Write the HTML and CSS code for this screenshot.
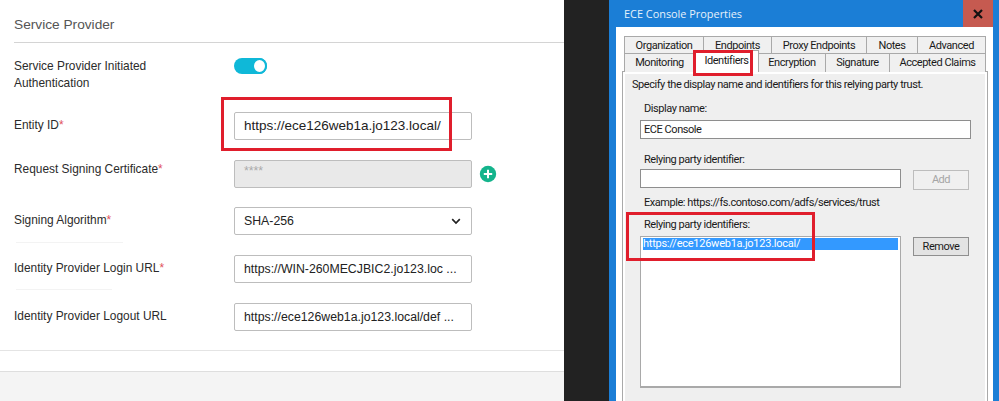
FILE: index.html
```html
<!DOCTYPE html>
<html lang="en">
<head>
<meta charset="utf-8">
<title>Service Provider and ECE Console Properties</title>
<link rel="stylesheet" href="styles.css">
</head>
<body>
<div class="page">
  <main class="panel">
    <h2 class="heading">Service Provider</h2>
    <div class="form">
      <div class="row row-toggle">
        <div class="label label-two">Service Provider Initiated Authentication</div>
        <div class="toggle"><span class="knob"></span></div>
      </div>
      <div class="row">
        <div class="label">Entity ID<span class="req">*</span></div>
        <div class="field field-large">https://ece126web1a.jo123.local/</div>
      </div>
      <div class="row">
        <div class="label label-high">Request Signing Certificate<span class="req">*</span></div>
        <div class="field field-disabled">****</div>
        <svg class="plus" viewBox="0 0 18 18" width="18" height="18"><circle cx="9" cy="9" r="8.2" fill="#14b48c"/><path d="M9 4.8v8.4M4.8 9h8.4" stroke="#fff" stroke-width="2" fill="none"/></svg>
      </div>
      <div class="row">
        <div class="label">Signing Algorithm<span class="req">*</span><div class="rule rule-a"></div></div>
        <div class="field field-select"><span>SHA-256</span>
          <svg viewBox="0 0 10 7" width="10" height="7"><path d="M1.2 1.2 5 5l3.800-3.800" stroke="#222" stroke-width="1.700" fill="none"/></svg>
        </div>
      </div>
      <div class="row">
        <div class="label">Identity Provider Login URL<span class="req">*</span><div class="rule rule-b"></div></div>
        <div class="field">https://WIN-260MECJBIC2.jo123.loc ...</div>
      </div>
      <div class="row">
        <div class="label">Identity Provider Logout URL</div>
        <div class="field">https://ece126web1a.jo123.local/def ...</div>
      </div>
    </div>
    <div class="spacer"></div>
    <div class="footer"></div>
  </main>
  <div class="desk">
    <section class="window">
      <header class="titlebar">
        <span class="title">ECE Console Properties</span>
        <span class="close"><svg viewBox="0 0 10 10" width="10" height="10"><path d="M1 1l8 8M9 1 1 9" stroke="#111" stroke-width="2.200" fill="none"/></svg></span>
      </header>
      <div class="client">
        <div class="tabs tabs-back">
          <span class="tab">Organization</span><span class="tab">Endpoints</span><span class="tab">Proxy Endpoints</span><span class="tab">Notes</span><span class="tab">Advanced</span>
        </div>
        <div class="tabs tabs-front">
          <span class="tab">Monitoring</span><span class="tab tab-active">Identifiers</span><span class="tab">Encryption</span><span class="tab">Signature</span><span class="tab">Accepted Claims</span>
        </div>
        <div class="sheet">
          <p class="intro">Specify the display name and identifiers for this relying party trust.</p>
          <label class="cap cap-display">Display name:</label>
          <div class="box box-wide">ECE Console</div>
          <label class="cap cap-party">Relying party identifier:</label>
          <div class="line line-input">
            <div class="box box-narrow"></div>
            <span class="btn btn-off">Add</span>
          </div>
          <p class="cap cap-example">Example: https://fs.contoso.com/adfs/services/trust</p>
          <label class="cap cap-list">Relying party identifiers:</label>
          <div class="line">
            <div class="list"><div class="selected">https://ece126web1a.jo123.local/</div></div>
            <span class="btn btn-on">Remove</span>
          </div>
        </div>
      </div>
    </section>
  </div>
  <div class="mark mark-entity"></div>
  <div class="mark mark-tab"></div>
  <div class="mark mark-list"></div>
</div>
</body>
</html>
```
FILE: styles.css
```css
* { box-sizing: border-box; }
html, body { margin: 0; padding: 0; background: #fff; }
.page {
  position: relative;
  display: flex;
  width: 999px;
  height: 401px;
  overflow: hidden;
  font-family: "Liberation Sans", Arial, sans-serif;
}

/* left panel */
.panel {
  width: 564px;
  flex: none;
  display: flex;
  flex-direction: column;
  background: #fff;
  color: #2b2b2b;
  font-size: 11.900px;
}
.heading {
  margin: 0 0 0 14px;
  height: 43px;
  padding-top: 16px;
  border-bottom: 1px solid #d4d4d4;
  font-size: 13.700px;
  line-height: 18px;
  font-weight: 400;
  color: #555;
}
.form {
  display: flex;
  flex-direction: column;
  gap: 19.75px;
  padding: 14px 0 0 14px;
}
.row { display: flex; height: 28px; align-items: flex-start; }
.row-toggle { height: 35px; }
.label {
  width: 220px;
  flex: none;
  padding-top: 5px;
  line-height: 17px;
}
.label-two { width: 140px; margin-right: 80px; padding-top: 1px; line-height: 17px; }
.label-high { padding-top: 1px; }
.req { color: #e0505a; }
.rule { height: 1px; background: #f3f3f3; }
.rule-a { width: 107px; margin: 13px 0 0 2px; }
.rule-b { width: 96px; margin: 12px 0 0 2px; }
.toggle {
  width: 33px;
  height: 16px;
  margin-top: 1px;
  border-radius: 8px;
  background: #0fb8d8;
  display: flex;
  justify-content: flex-end;
}
.knob {
  width: 15px;
  height: 16px;
  border-radius: 50%;
  background: #fff;
  border: 2px solid #0fb8d8;
}
.field {
  width: 238px;
  height: 28px;
  flex: none;
  padding: 0 9px;
  border: 1px solid #bdbdbd;
  border-radius: 2px;
  background: #fff;
  font-size: 12.300px;
  line-height: 26px;
  color: #222;
  white-space: nowrap;
  overflow: hidden;
}
.field-large { font-size: 13.500px; }
.field-disabled { background: #e9e9e9; color: #aaa; line-height: 20px; }
.field-select { display: flex; align-items: center; justify-content: space-between; padding-right: 10px; }
.plus { margin: 5px 0 0 7px; }
.spacer { margin-top: 19px; border-top: 1px solid #e4e4e4; border-bottom: 1px solid #dedede; height: 22px; }
.footer { flex: 1; background: #f4f4f4; }

/* dialog */
.desk {
  flex: 1;
  background: #222;
  padding-left: 45px;
}
.window {
  height: 100%;
  background: #1b7ed6;
  padding: 0 6px 0 7px;
  display: flex;
  flex-direction: column;
  font-family: Roboto, "Liberation Sans", sans-serif;
  font-size: 11px;
  letter-spacing: -0.45px;
  color: #1a1a1a;
}
.titlebar { height: 27px; flex: none; display: flex; justify-content: space-between; }
.title { padding: 6px 0 0 8px; color: #e6f1fb; font-family: "Open Sans", sans-serif; font-size: 10.900px; letter-spacing: 0; line-height: 15px; }
.close {
  width: 30px;
  height: 27px;
  background: #c65a50;
  display: flex;
  align-items: center;
  justify-content: center;
}
.client { flex: 1; background: #fff; padding: 9px 5px 0 6px; }
.tabs { display: grid; margin: 0 2px; height: 17px; }
.tabs-back { grid-template-columns: 79px 68px 95px 51px 68px; }
.tabs-front { grid-template-columns: 70px 64px 67px 64px 96px; height: 18px; }
.tab {
  background: #f0f0f0;
  border: 1px solid #a9a9a9;
  border-bottom: 0;
  margin-right: -1px;
  text-align: center;
  line-height: 18px;
  white-space: nowrap;
}
.tab-active {
  position: relative;
  z-index: 1;
  margin-top: -3px;
  height: 22px;
  background: #fff;
  line-height: 20px;
}
.sheet {
  height: 400px;
  background: #efefef;
  border: 1px solid #a9a9a9;
  box-shadow: inset 0 0 0 2px #fff;
  padding: 5px 16px 0 17px;
}
.intro { margin: 0 0 0 -8px; line-height: 15px; white-space: nowrap; }
.cap { display: block; margin: 0; line-height: 15px; padding-left: 4px; white-space: nowrap; }
.cap-display { margin-top: 9px; }
.cap-party { margin-top: 13px; }
.cap-example { margin-top: 5px; }
.cap-list { margin-top: 7px; }
.box {
  height: 19px;
  background: #fff;
  border: 1px solid #8e8e8e;
  padding-left: 3px;
  line-height: 17px;
}
.box-wide { width: 331px; margin-top: 4px; }
.box-narrow { width: 261px; flex: none; }
.line { display: flex; gap: 12px; margin-top: 4px; align-items: flex-start; }
.line-input { margin-top: 2px; }
.btn {
  width: 56px;
  height: 20px;
  flex: none;
  text-align: center;
  line-height: 18px;
  border: 1px solid #bdbdbd;
  margin-top: 1px;
}
.btn-off { color: #a5a5a5; background: #f0f0f0; }
.btn-on { border-color: #8f8f8f; background: #e3e3e3; height: 19px; line-height: 17px; }
.list {
  width: 261px;
  height: 152px;
  flex: none;
  background: #fff;
  border: 1px solid #a9a9a9;
  border-bottom-width: 2px;
  padding: 1px 2px;
}
.selected { height: 12px; background: #3399ff; color: #fff; line-height: 12px; letter-spacing: -0.25px; white-space: nowrap; }

/* annotation boxes over the screenshot */
.mark { position: absolute; border: 3px solid #e01e2c; z-index: 2; }
.mark-entity { left: 221px; top: 97px; width: 231px; height: 54px; }
.mark-tab { left: 693px; top: 50px; width: 60px; height: 26px; }
.mark-list { left: 626px; top: 212px; width: 189px; height: 49px; }
```
